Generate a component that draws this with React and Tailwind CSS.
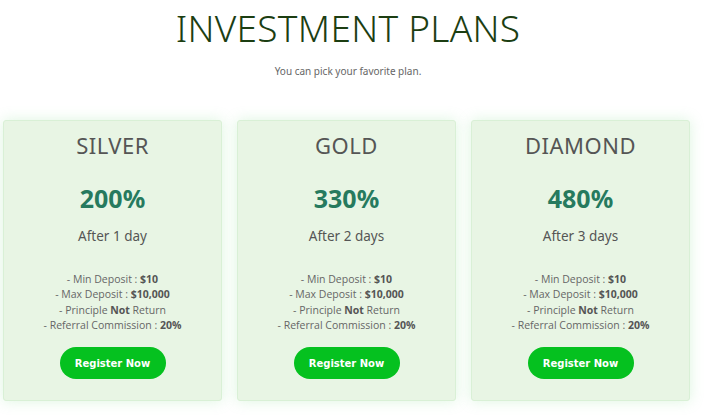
import React from "react";

const plans = [
  { name: "SILVER", rate: "200%", term: "After 1 day" },
  { name: "GOLD", rate: "330%", term: "After 2 days" },
  { name: "DIAMOND", rate: "480%", term: "After 3 days" },
];

const PlanCard = ({ plan }) => (
  <div className="flex h-[281px] w-[219px] flex-col items-center rounded-[3px] border border-[#d9f0d6] bg-[#e8f5e4] shadow-[0_0_14px_rgba(120,220,130,0.25)]">
    <h2 className="mt-[10px] text-[22px] leading-[28px] tracking-[0.5px] text-[#555555] [font-family:'Noto_Sans',sans-serif]">
      {plan.name}
    </h2>
    <p className="mt-[23px] text-[25px] font-bold leading-[32px] text-[#267a5e] [font-family:'Noto_Sans',sans-serif]">
      {plan.rate}
    </p>
    <p className="mt-[12px] text-[13.5px] leading-[20px] text-[#555555] [font-family:'Noto_Sans',sans-serif]">
      {plan.term}
    </p>
    {/* plan details */}
    <ul className="mt-[26px] text-center text-[10.5px] leading-[15.3px] text-[#666666] [font-family:'Open_Sans',sans-serif]">
      <li>
        - Min Deposit : <b className="text-[#555555]">$10</b>
      </li>
      <li>
        - Max Deposit : <b className="text-[#555555]">$10,000</b>
      </li>
      <li>
        - Principle <b className="text-[#555555]">Not</b> Return
      </li>
      <li>
        - Referral Commission : <b className="text-[#555555]">20%</b>
      </li>
    </ul>
    <button className="mt-[14px] h-[32px] w-[106px] rounded-full bg-[#05c11f] text-[10px] font-bold text-white [font-family:'DejaVu_Sans',sans-serif]">
      Register Now
    </button>
  </div>
);

const App = () => {
  return (
    <div className="h-[415px] w-[718px] overflow-hidden bg-white">
      <div className="w-[693px] pl-[3px]">
        <h1 className="pt-[8px] text-center text-[37px] font-light leading-[40px] tracking-[0.3px] text-[#1c3e12] [font-family:'Noto_Sans',sans-serif]">
          INVESTMENT PLANS
        </h1>
        <p className="mt-[17px] text-center text-[10px] leading-[12px] text-[#666666] [font-family:'Noto_Sans',sans-serif]">
          You can pick your favorite plan.
        </p>
        <div className="mt-[43px] flex gap-[15px]">
          {plans.map((plan, index) => (
            <PlanCard key={index} plan={plan} />
          ))}
        </div>
      </div>
    </div>
  );
};

export default App;
